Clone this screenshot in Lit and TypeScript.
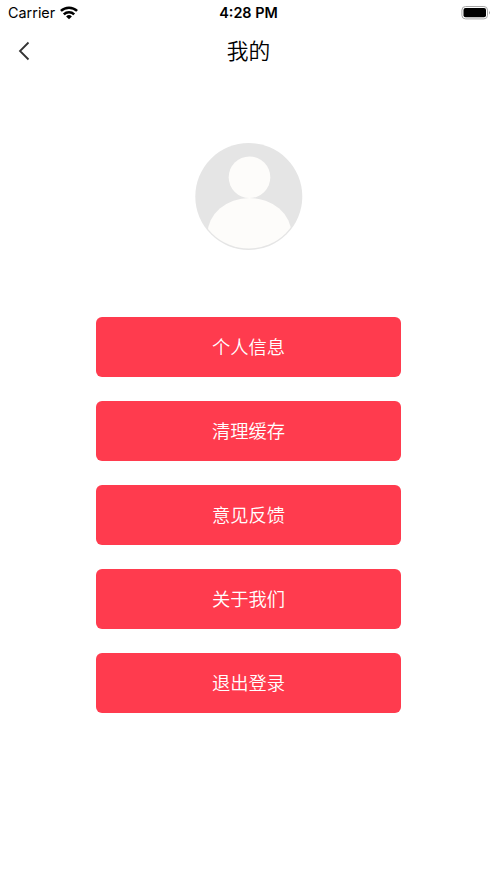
import { LitElement, html, css } from "lit";
import { customElement } from "lit/decorators.js";

@customElement("app-root")
export class AppRoot extends LitElement {
  static styles = css`
    :host {
      display: flex;
      flex-direction: column;
      height: 883px;
      overflow: hidden;
      background: #fff;
      color: #000;
      font-family: Inter, "Noto Sans CJK SC", sans-serif;
    }
    .status {
      display: grid;
      grid-template-columns: 1fr auto 1fr;
      align-items: center;
      height: 26px;
      padding: 0 6px 0 8px;
      font-size: 14.4px;
      line-height: 26px;
    }
    .carrier { display: flex; align-items: center; gap: 5px; }
    .time { font-weight: 600; margin-right: 2px; }
    .battery { justify-self: end; display: block; }
    svg { display: block; }
    .nav {
      display: grid;
      grid-template-columns: 48px 1fr 48px;
      align-items: center;
      height: 49px;
    }
    .back { justify-self: center; }
    .title {
      margin: 0;
      padding-bottom: 2px;
      text-align: center;
      font-family: "Noto Sans CJK SC", sans-serif;
      font-size: 21.8px;
      font-weight: 350;
      line-height: 29px;
    }
    .avatar { align-self: center; margin-top: 67px; }
    .menu {
      display: flex;
      flex-direction: column;
      align-items: center;
      gap: 24px;
      margin-top: 66px;
    }
    .item {
      width: 305px;
      height: 60px;
      padding: 0 0 2px;
      border: 0;
      border-radius: 6px;
      background: #ff3b4e;
      color: #fff;
      font: 350 18.3px/58px "Noto Sans CJK SC", sans-serif;
    }
  `;

  private items = ["个人信息", "清理缓存", "意见反馈", "关于我们", "退出登录"];

  render() {
    return html`
      <div class="status">
        <div class="carrier">
          <span>Carrier</span>
          <svg width="18" height="14" viewBox="0 0 18 14" fill="none" stroke="#000" stroke-width="2.5">
            <path d="M.9 4.9a11.7 11.7 0 0 1 16.2 0M3.8 8.3a7.5 7.5 0 0 1 10.4 0" />
            <path d="M9 13.2 6.1 10.5a4.2 4.2 0 0 1 5.8 0z" fill="#000" stroke="none" />
          </svg>
        </div>
        <span class="time">4:28 PM</span>
        <svg class="battery" width="30" height="14" viewBox="0 0 30 14">
          <rect x=".9" y=".5" width="25.6" height="12.4" rx="3.6" fill="none" stroke="#a6a6a6" />
          <rect x="2.5" y="2" width="22.5" height="9.3" rx="2" />
          <path d="M28 4.5q1.6 2 0 4z" fill="#999" />
        </svg>
      </div>
      <div class="nav">
        <svg class="back" width="12" height="20" viewBox="0 0 12 20" fill="none" stroke="#333" stroke-width="1.8">
          <path d="m10.5 1.5-8.5 8.5 8.5 8.5" />
        </svg>
        <h1 class="title">我的</h1>
      </div>
      <svg class="avatar" width="108" height="109" viewBox="0 0 108 109">
        <defs><clipPath id="disc"><circle cx="53.8" cy="54.3" r="52.3" /></clipPath></defs>
        <circle cx="53.8" cy="54.5" r="53.5" fill="#e5e5e5" />
        <g fill="#fdfcfa" clip-path="url(#disc)">
          <circle cx="54.5" cy="35.2" r="20.8" />
          <ellipse cx="54.5" cy="92" rx="42" ry="36" />
        </g>
      </svg>
      <div class="menu">
        ${this.items.map((label) => html`<button class="item">${label}</button>`)}
      </div>
    `;
  }
}
